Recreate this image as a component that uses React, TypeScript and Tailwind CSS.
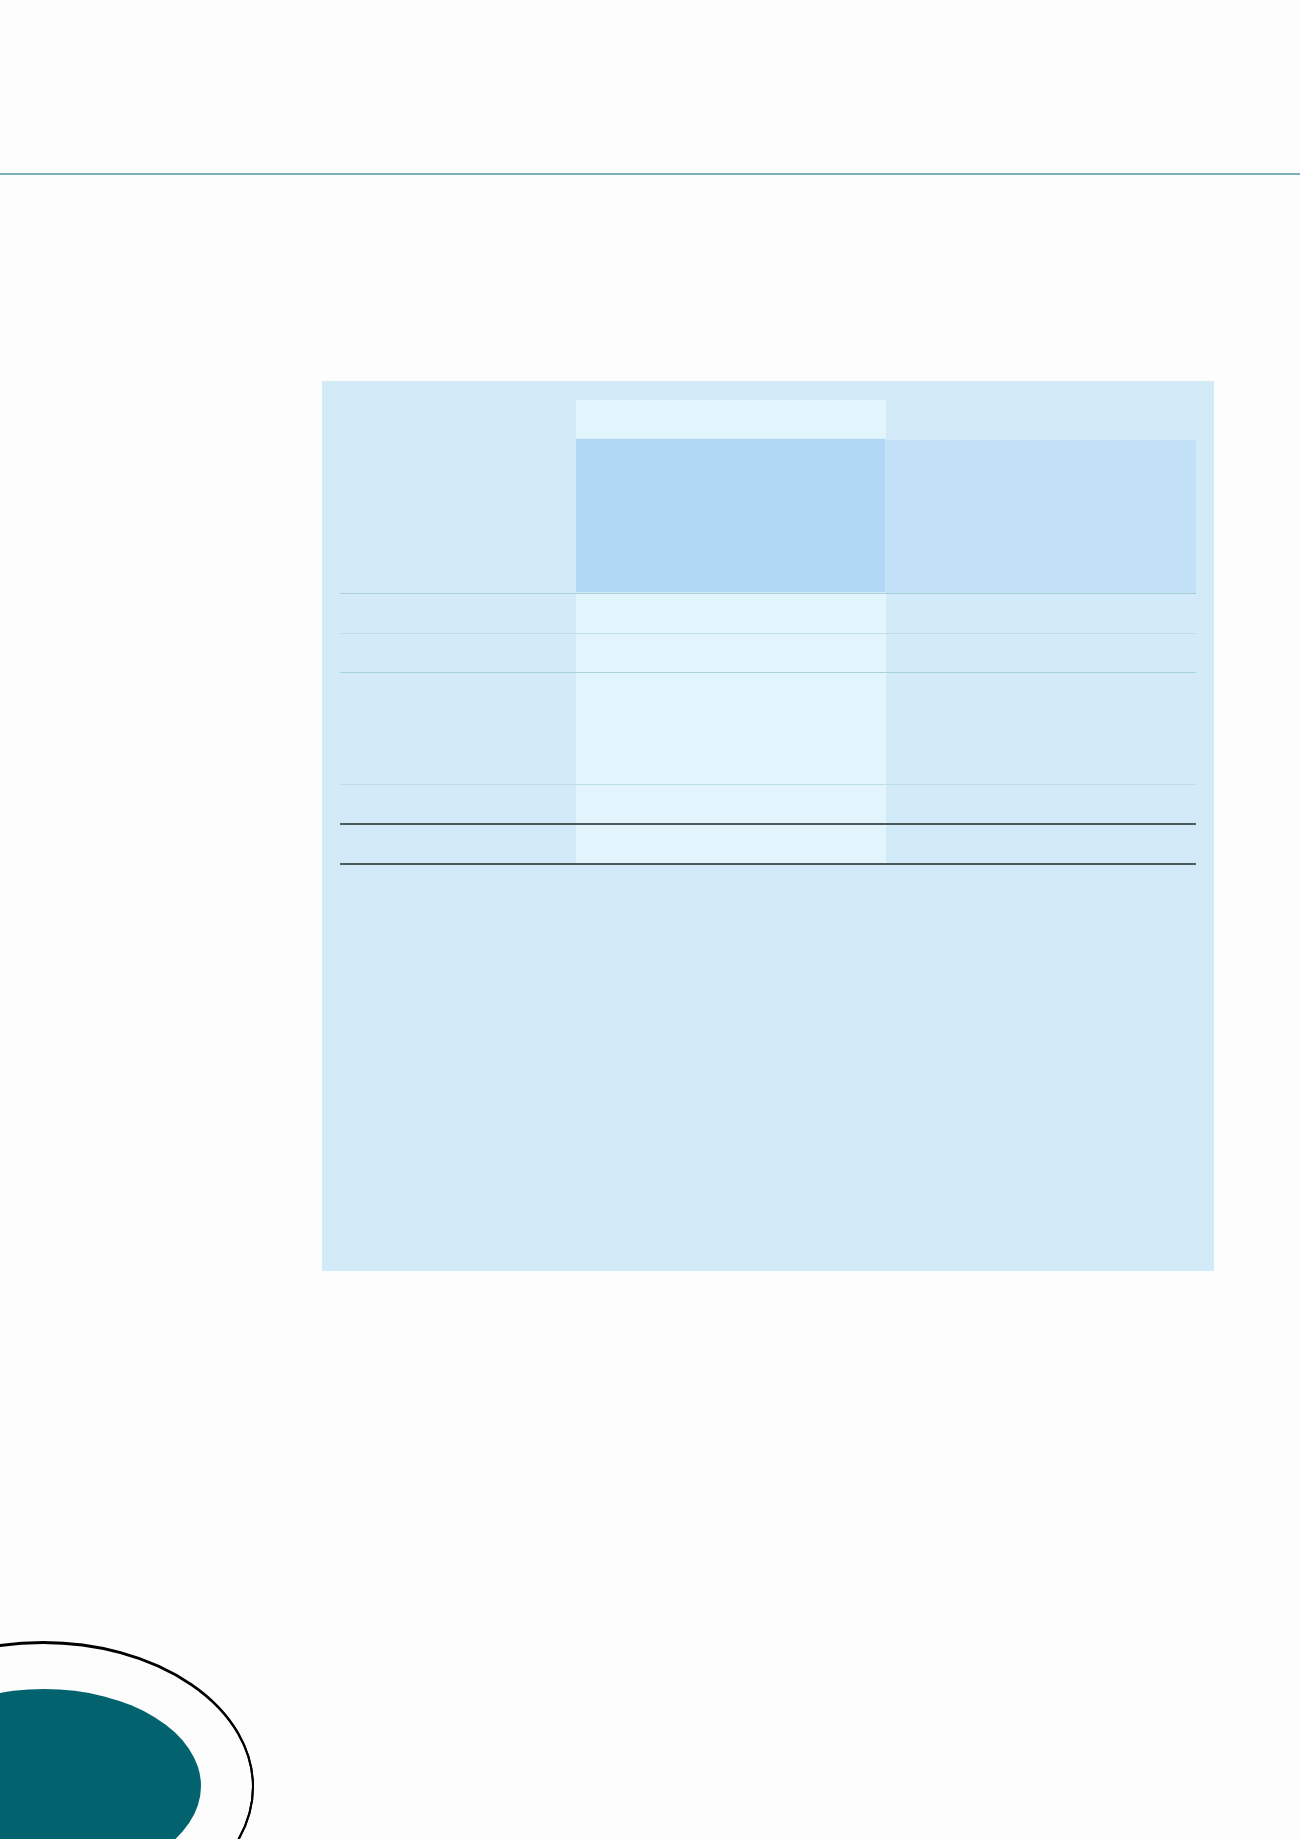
import React from "react";

type Row = { h: string; line: string };

const bodyRows: Row[] = [
  { h: "h-[39px]", line: "border-b border-[#bfdfe5]" },
  { h: "h-[38px]", line: "border-b border-[#a9d3da]" },
  { h: "h-[111px]", line: "border-b border-[#bcdde4]" },
  { h: "h-[38px]", line: "border-b-2 border-[#4d5a5e]" },
  { h: "h-[38px]", line: "border-b-2 border-[#4d5a5e]" },
];

const Badge = () => (
  <svg width="300" height="219" viewBox="0 0 300 219" className="block">
    <ellipse cx="44" cy="166" rx="157" ry="97" fill="#02636f" />
    <ellipse cx="43" cy="167" rx="210" ry="144" fill="none" stroke="#000" strokeWidth="2" />
    <ellipse cx="43.5" cy="166.5" rx="209.5" ry="144.5" fill="none" stroke="#000" strokeWidth="2" />
  </svg>
);

const App = () => {
  return (
    <div className="w-[1300px] h-[1839px] overflow-hidden bg-[#fdfdfd] flex flex-col" style={{ fontFamily: '"Liberation Sans", Arial, sans-serif' }}>
      <div className="h-[173px] shrink-0" />
      <div className="h-[2px] shrink-0 bg-[#7ab4b8]" />

      <section className="ml-[322px] mt-[206px] w-[892px] h-[890px] shrink-0 bg-[#d3eaf8] pt-[19px] px-[18px]">
        <div className="w-[856px]">
          {/* header */}
          <div className="grid grid-cols-[236px_310px_310px] border-b border-[#a9d0d6]">
            <div />
            <div className="flex flex-col">
              <div className="h-[39px] bg-[#e2f4fc] border-b border-[#d6edf9]" />
              <div className="h-[153px] bg-[#b0d8f4] border-r border-[#c6e4f6]" />
            </div>
            <div className="flex flex-col">
              <div className="h-[40px]" />
              <div className="h-[153px] bg-[#c2e1f6]" />
            </div>
          </div>

          {/* body */}
          {bodyRows.map((r, i) => (
            <div key={i} className={`grid grid-cols-[236px_310px_310px] ${r.line}`}>
              <div className={r.h} />
              <div className={`${r.h} bg-[#e2f4fc]`} />
              <div className={r.h} />
            </div>
          ))}
        </div>
      </section>

      <div className="mt-[349px] shrink-0">
        <Badge />
      </div>
    </div>
  );
};

export default App;
